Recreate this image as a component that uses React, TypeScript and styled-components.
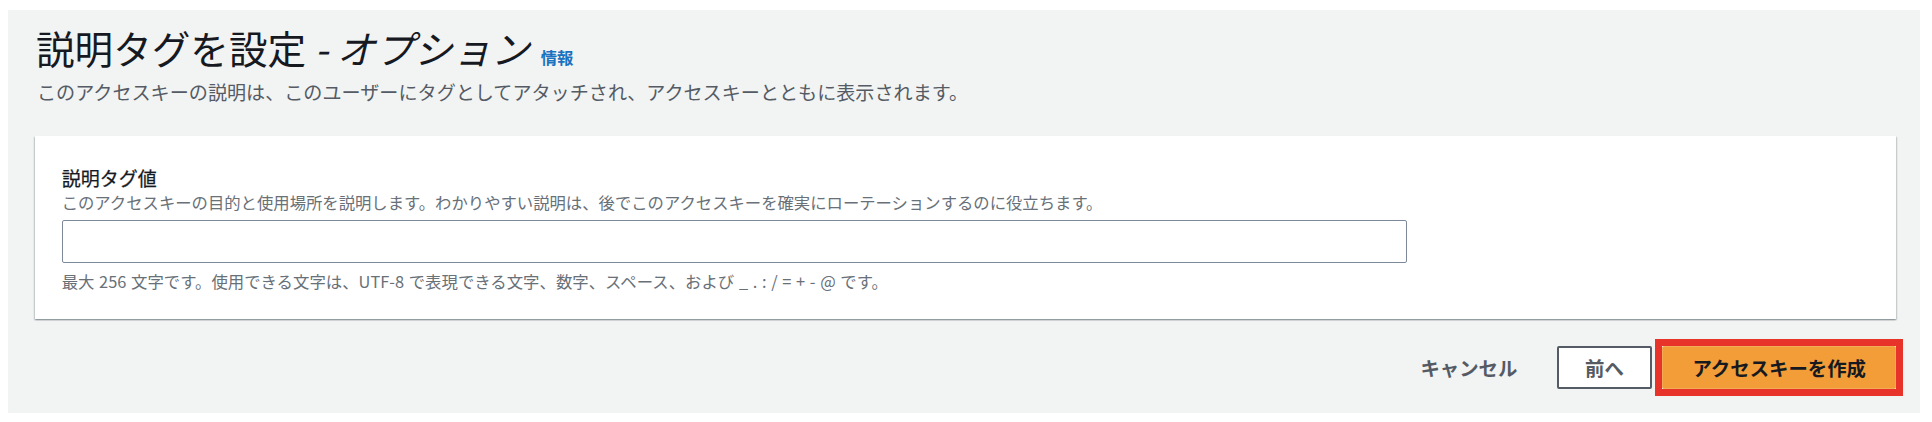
import React from "react";
import styled, { createGlobalStyle } from "styled-components";

const GlobalStyle = createGlobalStyle`
  html, body {
    margin: 0;
    padding: 0;
    background: #ffffff;
  }
  body {
    padding: 10px 12px 9px 8px;
    font-family: "Noto Sans CJK JP", "Noto Sans", sans-serif;
    color: #16191f;
  }
  * { box-sizing: border-box; }
`;

const Page = styled.div`
  background: #f2f3f3;
  padding: 13px 24px 24px 27px;
  display: flex;
  flex-direction: column;
`;

const HeaderRow = styled.div`
  display: flex;
  align-items: baseline;
  gap: 11px;
  padding-left: 1px;
`;

const Title = styled.h1`
  margin: 0;
  font-size: 38.6px;
  line-height: 48px;
  font-weight: 400;
  color: #16191f;
`;

const Optional = styled.i`
  font-style: italic;
`;

const InfoLink = styled.a`
  font-size: 16.4px;
  line-height: 21px;
  font-weight: 700;
  color: #1a72c0;
  text-decoration: none;
  cursor: pointer;
`;

const Subtitle = styled.p`
  margin: 7px 0 0 2px;
  font-size: 19.1px;
  line-height: 29.33px;
  color: #545b64;
`;

const Card = styled.section`
  margin-top: 29px;
  background: #ffffff;
  padding: 26.67px;
  box-shadow: 0 1.33px 1.33px 0 rgba(0, 28, 36, 0.3),
    1.33px 1.33px 1.33px 0 rgba(0, 28, 36, 0.15),
    -1.33px 1.33px 1.33px 0 rgba(0, 28, 36, 0.15);
  display: flex;
  flex-direction: column;
`;

const Label = styled.label`
  font-size: 19px;
  line-height: 29.33px;
  font-weight: 400;
  color: #16191f;
  -webkit-text-stroke: 0.25px #16191f;
`;

const Description = styled.div`
  font-size: 16.35px;
  line-height: 21.33px;
  color: #687078;
`;

const TextInput = styled.input`
  margin-top: 6.67px;
  width: 1345px;
  height: 42.67px;
  border: 1.33px solid #7d8998;
  border-radius: 2px;
  background: #ffffff;
  padding: 0 13px;
  font-family: inherit;
  font-size: 18.67px;
  outline: none;
`;

const Hint = styled.div`
  margin-top: 8px;
  font-size: 16.4px;
  line-height: 21.33px;
  color: #687078;
  word-spacing: 1px;
`;

const Actions = styled.div`
  margin-top: 27px;
  display: flex;
  justify-content: flex-end;
  align-items: center;
  gap: 10.67px;
`;

const BaseButton = styled.button`
  height: 42.67px;
  font-family: inherit;
  font-size: 19.4px;
  font-weight: 700;
  line-height: 1;
  border-radius: 2px;
  cursor: pointer;
  display: inline-flex;
  align-items: center;
  justify-content: center;
  white-space: nowrap;
`;

const LinkButton = styled(BaseButton)`
  background: transparent;
  border: none;
  color: #545b64;
  padding: 0 29px;
`;

const NormalButton = styled(BaseButton)`
  background: #ffffff;
  border: 2px solid #545b64;
  color: #545b64;
  padding: 0 26px;
`;

const PrimaryButton = styled(BaseButton)`
  position: relative;
  background: #f29d38;
  border: 1px solid #f4ab55;
  color: #16191f;
  padding: 0 29px;

  &::after {
    content: "";
    position: absolute;
    top: -8px;
    left: -8px;
    right: -8px;
    bottom: -8px;
    border: 7px solid #e8332a;
    pointer-events: none;
  }
`;

export default function App() {
  return (
    <>
      <GlobalStyle />
      <Page>
        <HeaderRow>
          <Title>
            説明タグを設定 <Optional>- オプション</Optional>
          </Title>
          <InfoLink>情報</InfoLink>
        </HeaderRow>
        <Subtitle>
          このアクセスキーの説明は、このユーザーにタグとしてアタッチされ、アクセスキーとともに表示されます。
        </Subtitle>
        <Card>
          <Label htmlFor="desc-tag">説明タグ値</Label>
          <Description>
            このアクセスキーの目的と使用場所を説明します。わかりやすい説明は、後でこのアクセスキーを確実にローテーションするのに役立ちます。
          </Description>
          <TextInput id="desc-tag" type="text" />
          <Hint>
            最大 256 文字です。使用できる文字は、UTF-8 で表現できる文字、数字、スペース、および _ . : / = + - @ です。
          </Hint>
        </Card>
        <Actions>
          <LinkButton>キャンセル</LinkButton>
          <NormalButton>前へ</NormalButton>
          <PrimaryButton>アクセスキーを作成</PrimaryButton>
        </Actions>
      </Page>
    </>
  );
}
